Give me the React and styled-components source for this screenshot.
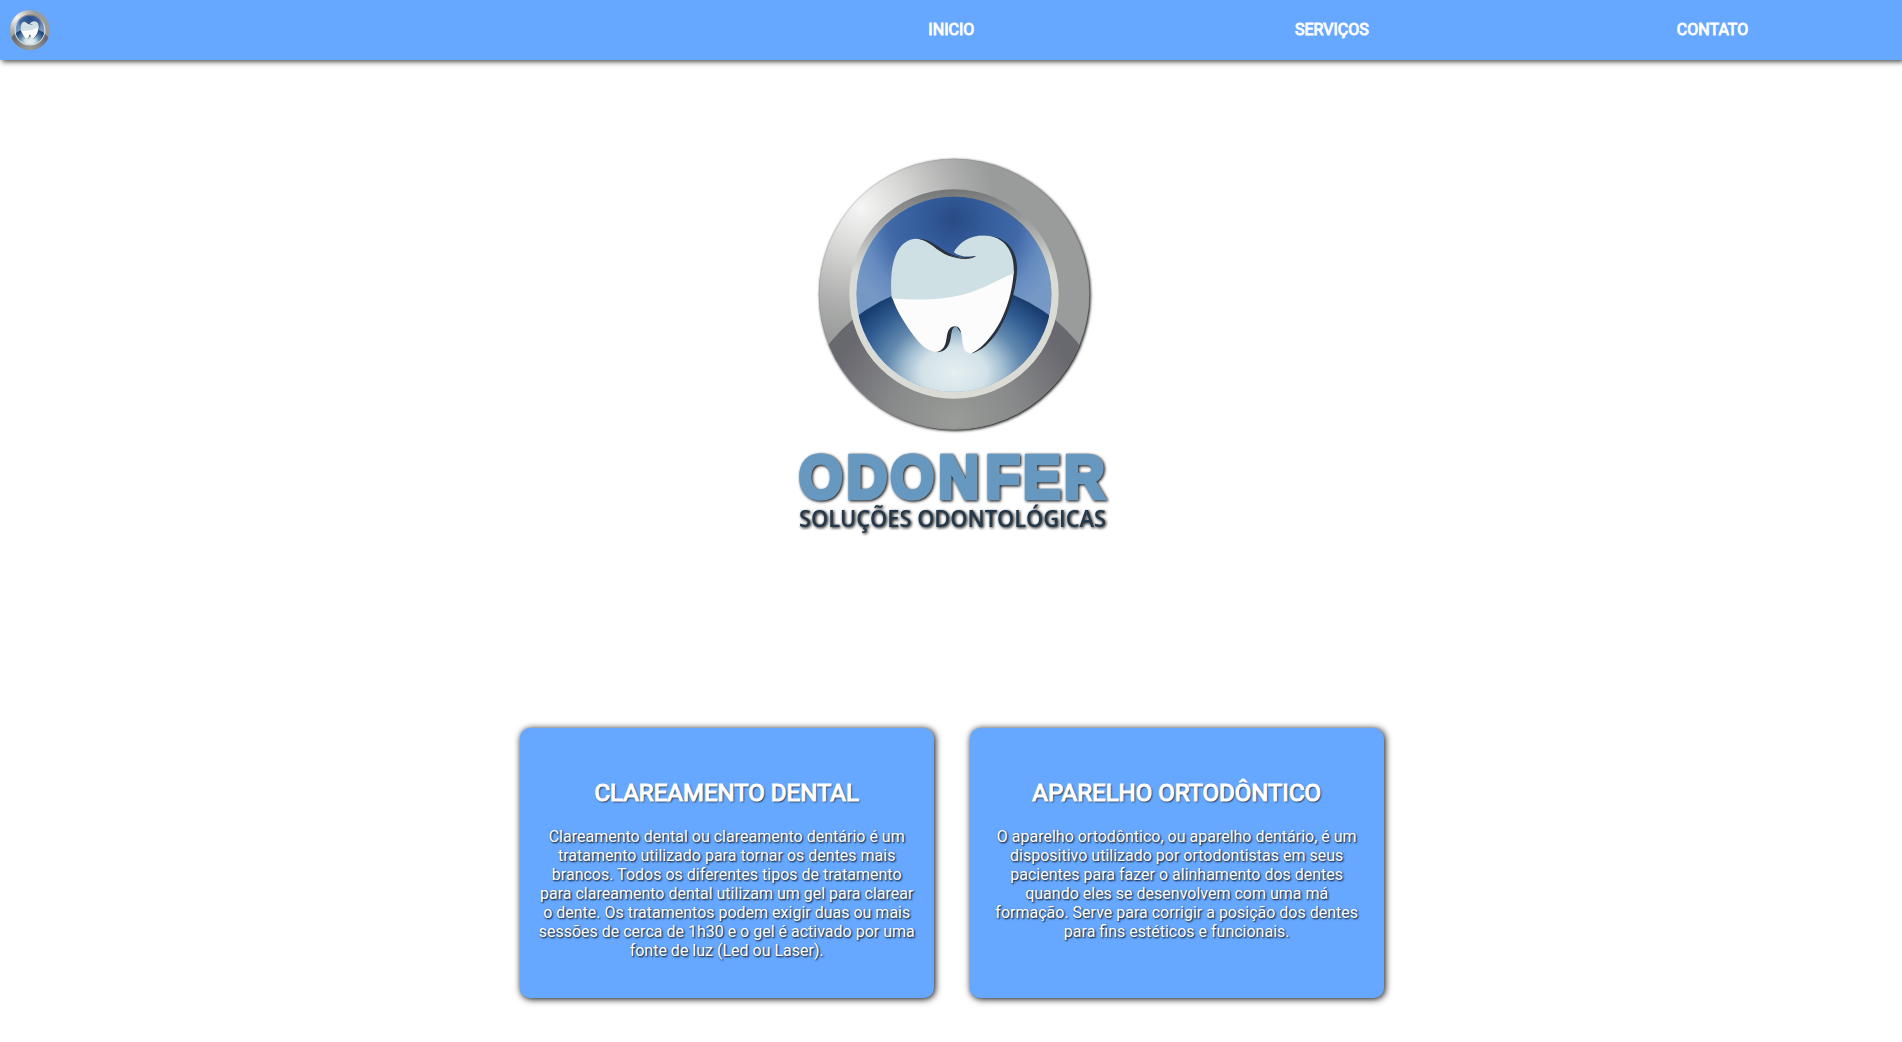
import React from 'react';
import styled, { createGlobalStyle } from 'styled-components';

const GlobalStyle = createGlobalStyle`
  * { box-sizing: border-box; }
  body {
    margin: 0;
    background: #fff;
    font-family: Roboto, "Liberation Sans", sans-serif;
    overflow: hidden;
  }
`;

const Page = styled.div`
  display: flex;
  flex-direction: column;
  height: 1042px;
`;

const Header = styled.header`
  display: flex;
  align-items: center;
  height: 60px;
  flex: none;
  padding-left: 10px;
  background: #66a8ff;
  box-shadow: 2px 2px 5px rgba(0, 0, 0, 0.68);
`;

const Brand = styled.a`
  display: flex;
  width: 40px;
  height: 40px;
  flex: none;
`;

const Menu = styled.nav`
  display: grid;
  grid-template-columns: repeat(3, 380.6px);
  margin-left: auto;
  margin-right: -0.8px;
  padding-bottom: 1px;
`;

const MenuLink = styled.a`
  color: #fff;
  font-size: 16px;
  line-height: 18px;
  text-align: center;
  -webkit-text-stroke: 0.9px #fff;
`;

const Hero = styled.section`
  display: flex;
  justify-content: center;
  padding: 80px 0 188px;
`;

const Cards = styled.main`
  display: flex;
  justify-content: center;
  gap: 36px;
  padding-left: 2px;
`;

const Card = styled.article`
  width: 414px;
  height: 270px;
  padding: 51px 18.8px 0 18.2px;
  border-radius: 10px;
  background: #66a8ff;
  color: #fff;
  text-align: center;
  text-shadow: 1px 1px 2px #000;
  box-shadow: 1px 1px 7px #000;
`;

const CardTitle = styled.h2`
  margin: 0 0 20px;
  font-size: 24px;
  font-weight: 400;
  line-height: 28px;
  -webkit-text-stroke: 1.2px #fff;
`;

const CardText = styled.p`
  margin: 0;
  font-size: 16px;
  line-height: 19px;
`;

const LogoSvg = styled.svg`
  display: block;
  overflow: visible;
`;

function Emblem({ id }) {
  const u = (name) => `url(#${id}-${name})`;
  return (
    <g>
      <defs>
        <radialGradient id={`${id}-rim`} gradientUnits="userSpaceOnUse" cx="215" cy="205" r="400">
          <stop offset="0" stopColor="#f6f6f6" />
          <stop offset="0.35" stopColor="#d6d6d4" />
          <stop offset="0.7" stopColor="#b0b1b0" />
          <stop offset="1" stopColor="#999c9a" />
        </radialGradient>
        <radialGradient id={`${id}-rimLow`} gradientUnits="userSpaceOnUse" cx="494" cy="850" r="390">
          <stop offset="0" stopColor="#999c98" />
          <stop offset="0.5" stopColor="#88898a" />
          <stop offset="1" stopColor="#68686f" />
        </radialGradient>
        <linearGradient id={`${id}-bevel`} gradientUnits="userSpaceOnUse" x1="0" y1="149" x2="0" y2="400">
          <stop offset="0" stopColor="#747576" />
          <stop offset="0.3" stopColor="#949595" />
          <stop offset="0.75" stopColor="#c6c7c4" />
          <stop offset="1" stopColor="#dadbd4" />
        </linearGradient>
        <radialGradient id={`${id}-sky`} gradientUnits="userSpaceOnUse" cx="493" cy="240" r="330">
          <stop offset="0" stopColor="#294b85" />
          <stop offset="0.35" stopColor="#365f9f" />
          <stop offset="0.6" stopColor="#4169a7" />
          <stop offset="0.82" stopColor="#668cc0" />
          <stop offset="1" stopColor="#7598c5" />
        </radialGradient>
        <radialGradient id={`${id}-floor`} gradientUnits="userSpaceOnUse" cx="493" cy="700" r="330" gradientTransform="translate(493 700) scale(1.06 0.82) translate(-493 -700)">
          <stop offset="0" stopColor="#e6eff1" />
          <stop offset="0.28" stopColor="#d3e2e8" />
          <stop offset="0.42" stopColor="#a3bfd2" />
          <stop offset="0.58" stopColor="#6289ae" />
          <stop offset="0.8" stopColor="#335f94" />
          <stop offset="1" stopColor="#193e70" />
        </radialGradient>
        <clipPath id={`${id}-outer`}><circle cx="494" cy="464" r="406" /></clipPath>
        <clipPath id={`${id}-inner`}><circle cx="493.5" cy="464" r="293" /></clipPath>
      </defs>
      <circle cx="494" cy="464" r="406" fill={u('rim')} />
      <g clipPath={u('outer')}>
        <circle cx="493" cy="909" r="477" fill={u('rimLow')} />
      </g>
      <circle cx="494" cy="464" r="405" fill="none" stroke="#777" strokeOpacity="0.3" strokeWidth="2" />
      <circle cx="493.5" cy="463.5" r="314" fill={u('bevel')} />
      <g clipPath={u('inner')}>
        <circle cx="493.5" cy="464" r="294" fill={u('sky')} />
        <circle cx="493" cy="909" r="477" fill={u('floor')} />
      </g>
      <path
        fill="#2c3138"
        d="M378 298C425 295 447 329 487 345C510 355 535 358 561 349C540 364 505 359 478 352L400 400L600 500L575 289C648 283 682 330 683 385C681 485 625 620 548 642L530 600L500 560C482 565 488 588 480 610C472 632 460 637 443 638L400 560Z"
      />
      <path
        fill="#fbfcfb"
        d="M307 470C322 520 358 570 386 605C404 625 425 638 445 637C466 629 469 612 472 590C476 568 484 560 497 560C513 561 516 577 518 602C520 625 527 643 547 641C588 620 622 570 640 530C660 485 669 445 673 395Z"
      />
      <path
        fill="#cfe0e5"
        d="M307 477C303 440 303 385 318 348C331 315 357 298 380 298C425 299 442 338 487 349C511 356 540 360 561 349C535 354 509 351 493 338C508 310 540 288 582 288C648 289 676 338 673 402C620 421 585 448 525 464C465 480 402 483 307 477Z"
      />
      <path fill="#2c3138" d="M386 298C427 299 446 328 480 345C507 357 538 357 561 349C542 363 508 360 477 349C439 334 424 306 386 298Z" />
    </g>
  );
}

function Logo() {
  return (
    <LogoSvg width="322" height="400" viewBox="0 0 322 400" role="img">
      <defs>
        <filter id="logo-shadow" x="-10%" y="-10%" width="120%" height="120%" colorInterpolationFilters="sRGB">
          <feDropShadow dx="1" dy="1" stdDeviation="1.7" floodColor="#000" floodOpacity="1" />
        </filter>
      </defs>
      <g filter="url(#logo-shadow)">
        <g transform="translate(-0.5 -0.5) scale(0.33333)"><Emblem id="hero" /></g>
        <text
          transform="scale(0.92 1)"
          x="9.8 61.6 109.2 161.3 212.7 253.6 298.2"
          y="357.6"
          fontFamily="Liberation Sans, Arial, sans-serif"
          fontWeight="700"
          fontSize="61"
          fill="#6798bf"
          stroke="#6798bf"
          strokeWidth="4.6"
        >
          ODONFER
        </text>
        <text x="9" y="387" textLength="307" lengthAdjust="spacingAndGlyphs" fontFamily="Open Sans, sans-serif" fontWeight="650" fontSize="24" fill="#23384b">SOLUÇÕES ODONTOLÓGICAS</text>
      </g>
    </LogoSvg>
  );
}

const services = [
  {
    title: 'CLAREAMENTO DENTAL',
    text: 'Clareamento dental ou clareamento dentário é um tratamento utilizado para tornar os dentes mais brancos. Todos os diferentes tipos de tratamento para clareamento dental utilizam um gel para clarear o dente. Os tratamentos podem exigir duas ou mais sessões de cerca de 1h30 e o gel é activado por uma fonte de luz (Led ou Laser).',
  },
  {
    title: 'APARELHO ORTODÔNTICO',
    text: 'O aparelho ortodôntico, ou aparelho dentário, é um dispositivo utilizado por ortodontistas em seus pacientes para fazer o alinhamento dos dentes quando eles se desenvolvem com uma má formação. Serve para corrigir a posição dos dentes para fins estéticos e funcionais.',
  },
];

export default function App() {
  return (
    <Page>
      <GlobalStyle />
      <Header>
        <Brand>
          <LogoSvg width="40" height="40" viewBox="88 58 812 812"><Emblem id="nav" /></LogoSvg>
        </Brand>
        <Menu>
          {['INICIO', 'SERVIÇOS', 'CONTATO'].map((label) => (
            <MenuLink key={label}>{label}</MenuLink>
          ))}
        </Menu>
      </Header>
      <Hero><Logo /></Hero>
      <Cards>
        {services.map((s) => (
          <Card key={s.title}>
            <CardTitle>{s.title}</CardTitle>
            <CardText>{s.text}</CardText>
          </Card>
        ))}
      </Cards>
    </Page>
  );
}
